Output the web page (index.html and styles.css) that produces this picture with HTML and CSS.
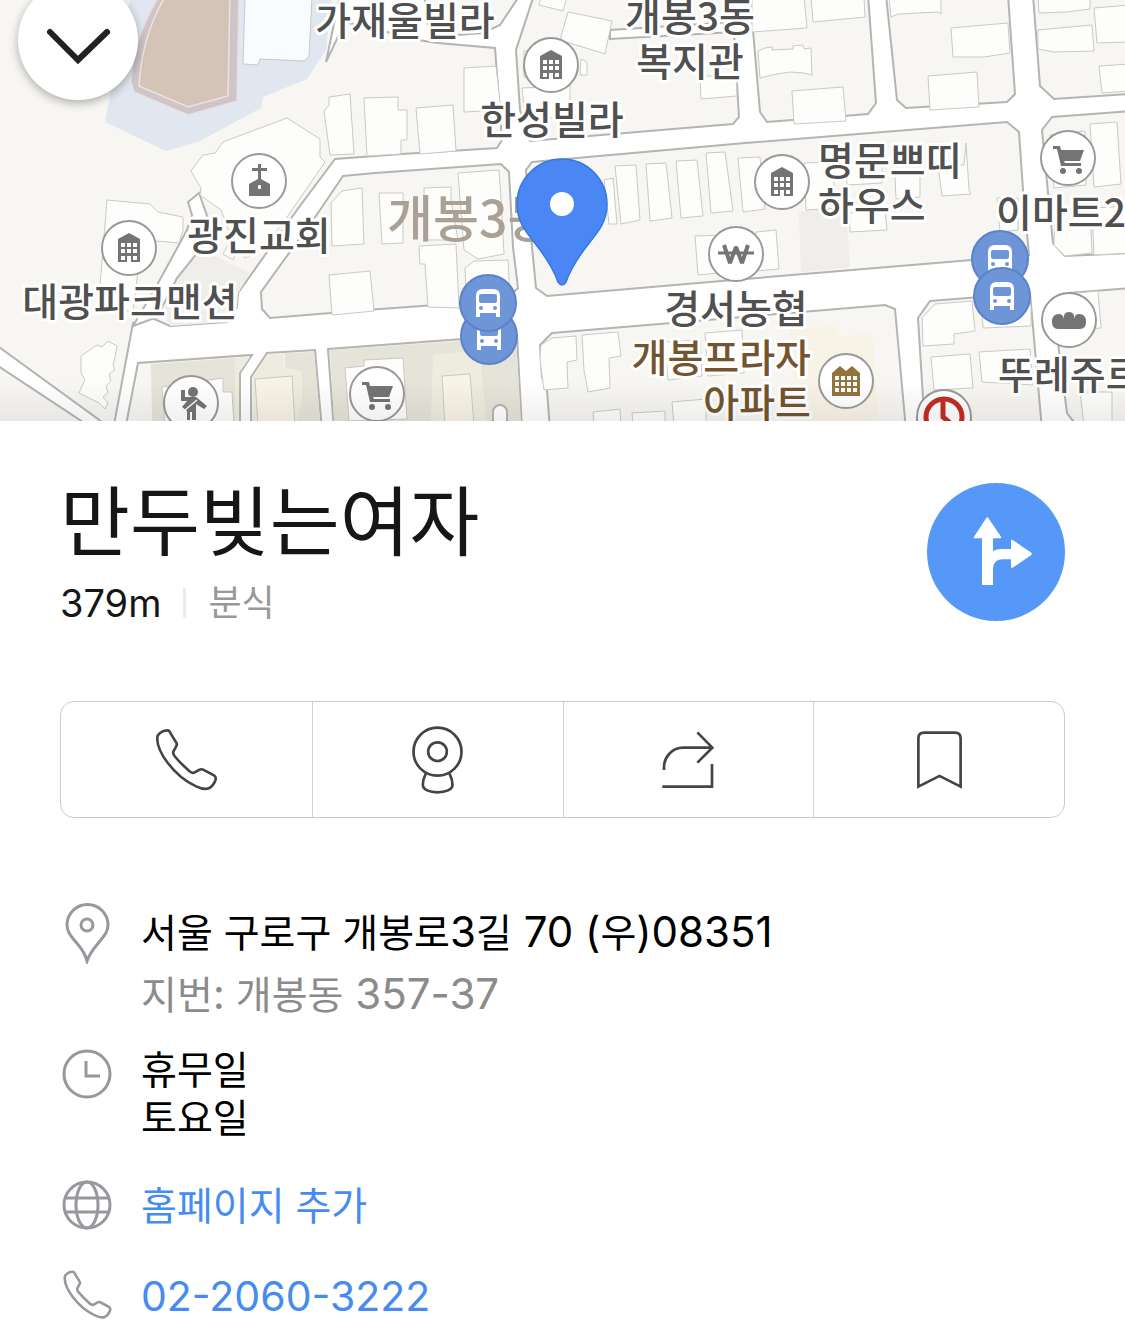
FILE: index.html
```html
<!DOCTYPE html>
<html lang="ko">
<head>
<meta charset="utf-8">
<meta name="viewport" content="width=device-width, initial-scale=1">
<title>만두빚는여자</title>
<link rel="stylesheet" href="styles.css">
</head>
<body>
<svg class="defs" aria-hidden="true">
  <symbol id="phone" viewBox="312 114 190 190">
    <path d="M319 142C319 135 330 121 350 121C356 121 357 126 360 132L376 158C380 164 378 167 375 171L368 184C365 190 367 194 372 200C385 216 402 232 417 245C423 251 428 250 433 247L446 240C451 237 455 238 460 241L490 257C497 261 496 266 494 272C490 282 482 292 474 296C466 299 450 297 436 290C400 274 372 248 350 219C330 192 317 165 319 142Z"/>
  </symbol>
  <g id="building">
    <circle class="poi" r="27"/>
    <path class="glyph" d="M-11-9L0-15L11-9V14H-11Z"/>
    <path class="cut" d="M-8-5h4v4h-4zM-2-5h4v4h-4zM4-5h4v4h-4zM-8 1h4v4h-4zM-2 1h4v4h-4zM4 1h4v4h-4zM-8 8h4v4h-4zM4 8h4v4h-4zM-2 8h4v7h-4z"/>
  </g>
  <g id="cart">
    <circle class="poi" r="27"/>
    <path class="glyph" d="M-15-12H-8L-7-8H16L12 3H-4L-3 5H13V8H-7L-11-9H-15Z"/>
    <circle class="glyph" cx="-5" cy="13" r="3"/><circle class="glyph" cx="11" cy="13" r="3"/>
  </g>
  <g id="bus">
    <circle class="stop" r="28"/>
    <path class="cut" d="M-12-7Q-12-14-5-14H5Q12-14 12-7V14H8V10H-8V14H-12Z"/>
    <rect class="stop-fill" x="-9" y="-9" width="18" height="9" rx="2"/>
    <circle class="stop-fill" cx="-7" cy="5" r="2"/><circle class="stop-fill" cx="7" cy="5" r="2"/>
  </g>
</svg>

<main class="page">
  <section class="map" aria-label="지도">
    <svg class="map-canvas" viewBox="0 0 1125 421" preserveAspectRatio="xMidYMid slice">
      <defs>
        <linearGradient id="fade" x1="0" y1="0" x2="0" y2="1">
          <stop offset="0" stop-color="#000" stop-opacity="0"/>
          <stop offset="1" stop-color="#000" stop-opacity=".06"/>
        </linearGradient>
      </defs>
      <rect class="road" width="1125" height="421"/>
      <!-- city blocks -->
      <g class="block">
        <path d="M-5-5H340L326 62L345 22L400 35L418 40L438 43L495 48L502 140L497 148L402 154L335 159L297 210L238 293L237 307L227 322L170 326L152 318L133 323L113 430L-5 344Z"/>
        <path d="M-5 364L95 430H-5Z"/>
        <path d="M425-5Q424 20 431 30L458 35L483 33L500 25L520-5Z"/>
        <path d="M343 176L375 173L501 164L509 172L513 247L518 288L505 300L380 309L270 318L262 309L261 292L320 210Z"/>
        <path d="M125 430L138 363L252 355L240 373V430Z"/>
        <path d="M251 430V377L267 353L315 350L322 430Z"/>
        <path d="M334 430L328 349L517 335L522 430Z"/>
        <path d="M534-5L516 50L520 110L530 141L733 124L739 117L734 32L610 39V30L733 22V-5Z"/>
        <path d="M750-5L760 112L767 122L868 114L876 103L868-5Z"/>
        <path d="M886-5L897 100L906 108L1007 102L1015 94L1008-5Z"/>
        <path d="M1033-5L1040 86L1054 99L1130 94V-5Z"/>
        <path d="M532 162L745 143L1007 122L1019 132L1023 190L1029 255L972 260L745 279L547 296L536 288L532 247L526 170Z"/>
        <path d="M1130 111L1052 117L1042 130L1048 193L1053 243L1065 256L1130 253Z"/>
        <path d="M552 333L885 305L895 309L906 430H550L547 390L542 377L540 345Z"/>
        <path d="M930 301L1030 293L1033 327L1042 430H925L918 318Z"/>
        <path d="M1068 293L1130 288V430H1080L1067 413L1058 343Z"/>
      </g>
      <!-- tinted grounds -->
      <g>
        <path fill="#e0e7f0" d="M131-5H332L326 50L307 79L263 97L261 108L198 142L166 151L105 122L112 85Z"/>
        <path fill="#cfc4c8" stroke="#e8e0e2" stroke-width="1.5" d="M160-5Q134 35 131 82L134 92L188 115L237 101L239-5Z"/>
        <path fill="#d4c4b7" stroke="#eee4de" stroke-width="1.5" d="M166-5Q142 35 139 86L188 107L228 96L230-5Z"/>
        <path fill="#efeeea" d="M202 250L250 273L238 293L237 307L227 322L170 326L162 307L177 278ZM799 212L846 205L850 267L801 272Z"/>
        <path fill="#e6e4d8" d="M151 364L235 358V421H152ZM285 353L314 352L320 421H275V375H285ZM330 350L516 337L521 421H334Z"/>
        <path fill="#eeecdf" d="M235 358L250 357L239 373V421H235ZM253 377L268 354L284 353V367L302 372V400L296 421H252ZM433 355L480 350L486 421H431Z"/>
        <path fill="#f8f3e7" d="M790 329L834 326L841 336L872 334L878 415L870 421H795Z"/>
      </g>
      <path class="lane" d="M199 193L188 202L192 215L187 230L157 285L133 326L160 316L162 307L177 278L202 247L212 230Z"/>
      <path class="lane" d="M493 430V412A7 7 0 0 1 507 412V430Z"/>
      <!-- buildings -->
      <g class="house">
        <path fill="#f8fcff" d="M245-2L243 64L258 65L260 59L304 61L309 56L312-2Z"/>
        <path d="M191 171L203 155L215 153L223 142L287 118L320 139V157L325 162L285 220L262 250L245 258L238 248L233 260L223 254L232 238L221 210L200 195L201 188Z"/>
        <path d="M107 200L150 204L158 212L183 217V230L179 243L157 241L140 255L133 311H98Z"/>
        <path d="M324 111L329 105V97L350 94L354 154L330 155Z"/>
        <path d="M364 98L398 97V110H407V140H401V154L367 156ZM416 108L453 105L456 151L420 154ZM464 68L496 66L501 110L464 112ZM524 51H535V77H524ZM581 59L587 62V75H580ZM522 88L570 86V118H525Z"/>
        <path d="M331 203L342 191L362 188L364 244L332 246ZM329 275L370 271L374 311L332 315ZM379 193H403V243L382 244ZM424 188L451 187V200L458 240H425ZM458 173L499 170L501 199L504 254L478 259L464 250ZM419 246L456 244L459 308L428 307L425 264H420ZM465 268L474 261L508 260L510 296H466Z"/>
        <path d="M541-3L539 5L563 11L567-3ZM568 12L612 21L605 54L560 40ZM700 76L701 99L737 96L736 76Z"/>
        <path d="M752-3V32L807 28L804-3ZM811-3L813 22L865 17L864-3ZM758 51L765 48L772 47V50L793 49V46L803 45L804 49L811 48L812 75L804 73L790 72L772 75L760 78ZM792 91L843 87L846 121L794 124Z"/>
        <path d="M889-3L891 17L898 14L938 12L941 14V-3ZM951 28L1008 23L1010 53L984 57L953 57ZM928 76L977 72L979 107L930 110Z"/>
        <path d="M1038-3L1039 13L1066 12L1090 9V-3ZM1038 30L1092 25L1094 51L1054 52L1038 49ZM1094 8L1130 5V42L1097 43ZM1099 66L1130 64V91L1102 93Z"/>
        <path d="M604 180L613 178L617 224H609ZM615 166L636 165L640 220L621 224ZM646 164L666 163L672 218L650 221ZM676 161L697 160L703 216L681 218ZM706 153L725 152L733 211L711 213ZM738 158L760 157L765 209L743 212ZM804 163L830 162L838 208L806 210ZM845 160H882V183L847 185ZM895 176L920 175V197L896 199ZM938 165H964L966 143L969 190L971 194L942 196ZM850 213L885 211L887 230L850 232ZM695 236L726 235L728 272L698 275ZM756 232L776 230L779 269L754 271ZM997 198H1018V230L1000 232Z"/>
        <path d="M1050 135L1085 131L1086 185L1054 188ZM1090 124L1117 122L1121 184L1094 187ZM1055 210L1090 208L1092 253L1065 256L1054 245ZM1092 208L1130 206V253L1094 255Z"/>
        <path d="M541 345L552 338L576 336L577 360L567 362L568 388L544 390L540 360ZM582 335L618 332L621 356L609 358L610 388L588 392L584 370ZM593 412L620 409L621 425H594ZM632 413L665 411V425H633ZM672 402L706 399V425H674ZM665 342L700 340L702 376L668 380ZM705 333L742 330L744 373L708 376Z"/>
        <path d="M922 318L935 304L972 301L975 331L954 334V344L923 346ZM931 357L970 354L973 388L934 390ZM979 352L1030 349L1033 385L982 382ZM982 310L1031 305V326L983 328ZM1066 294L1098 291L1101 328L1068 330ZM1080 392H1112V425H1084Z"/>
        <path d="M81 356L97 345L102 347L108 341L117 346L115 357L113 365L115 370L109 374L111 381L106 386L108 393L103 397L108 403L105 409L99 403L79 393L85 380L81 373ZM162 387L223 378V392H232L234 425H165ZM345 368L364 366V360L403 358L407 419L349 421Z"/>
        <path fill="#f8f3e7" d="M255 379L292 376L295 425H258ZM442 376L470 374L474 425H445Z"/>
      </g>
      <!-- places -->
      <use href="#building" x="551" y="65"/>
      <use href="#building" x="129" y="248"/>
      <use href="#building" x="782" y="182"/>
      <use href="#cart" x="1068" y="158"/>
      <use href="#cart" x="377" y="394"/>
      <g transform="translate(259 181)">
        <circle class="poi" r="27"/>
        <path class="glyph" d="M-1-17H2V-13H8V-10H2V-2L11 3V15H-10V3L-1-2V-10H-7V-13H-1Z"/>
        <rect class="cut" x="-1" y="4" width="3" height="4" rx="1"/>
      </g>
      <g transform="translate(736 254)">
        <circle class="poi" r="27"/>
        <path class="won" d="M-12-9L-6 9L0-7L6 9L12-9"/>
        <path class="won-bar" d="M-18-1H18"/>
      </g>
      <g transform="translate(1069 320)">
        <circle class="poi" r="27"/>
        <path class="glyph" d="M-17 2Q-17-6-10-6Q-6-6-5-1Q-6-8 0-8Q6-8 5-1Q6-6 10-6Q17-6 17 2Q17 9 11 9H-11Q-17 9-17 2Z"/>
      </g>
      <g transform="translate(846 381)">
        <circle class="poi" r="27"/>
        <path fill="#94733f" d="M-14-8L-6-15L0-10L6-15L14-8V15H-14Z"/>
        <path class="cut" d="M-11-5h4v4h-4zM-5-5h4v4h-4zM1-5h4v4h-4zM7-5h4v4h-4zM-11 1h4v4h-4zM-5 1h4v4h-4zM1 1h4v4h-4zM7 1h4v4h-4zM-11 7h4v4h-4zM-5 7h4v4h-4zM1 7h4v4h-4zM7 7h4v4h-4z"/>
      </g>
      <g transform="translate(191 403)">
        <circle class="poi" r="27"/>
        <circle class="glyph" cx="2" cy="-11" r="5"/>
        <path class="glyph" d="M-10-13H-6V-6H5L16 3L13 6L5 1V17H1V9H-1V17H-4V8L-9 4L-4-2H-10Z"/>
        <path d="M-6 7L6-3" stroke="#fff" stroke-width="1.5"/>
      </g>
      <g transform="translate(944 417)">
        <circle class="poi" r="27"/>
        <circle r="18" fill="none" stroke="#c42b25" stroke-width="5"/>
        <path d="M-1-17V0L11 10" fill="none" stroke="#c42b25" stroke-width="5"/>
      </g>
      <use href="#bus" x="489" y="336"/>
      <use href="#bus" x="488" y="303"/>
      <use href="#bus" x="1000" y="259"/>
      <use href="#bus" x="1002" y="296"/>
      <!-- names -->
      <text class="area" x="387" y="237">개봉3동</text>
      <g class="name">
        <text x="405" y="35">가재울빌라</text>
        <text x="690" y="31">개봉3동</text>
        <text x="690" y="76">복지관</text>
        <text x="552" y="134">한성빌라</text>
        <text x="259" y="250">광진교회</text>
        <text x="130" y="316">대광파크맨션</text>
        <text x="736" y="323">경서농협</text>
      </g>
      <g class="name name-start">
        <text x="818" y="175">명문쁘띠</text>
        <text x="818" y="220">하우스</text>
        <text x="996" y="227">이마트24</text>
        <text x="998" y="389">뚜레쥬르</text>
      </g>
      <g class="name name-brown">
        <text x="811" y="372">개봉프라자</text>
        <text x="811" y="417">아파트</text>
      </g>
      <!-- selected place -->
      <path fill="#4a86f4" stroke="#3579df" stroke-width="1.5" d="M517 204A45 45 0 0 1 607 204C607 221 599 231 590 242C578 257 571 268 566 282Q562 288 558 282C553 268 546 257 534 242C525 231 517 221 517 204Z"/>
      <circle cx="562" cy="204" r="12" fill="#fff"/>
      <rect y="381" width="1125" height="40" fill="url(#fade)"/>
    </svg>
    <button class="collapse" type="button" aria-label="닫기">
      <svg width="120" height="120" viewBox="0 0 120 120"><path d="M32 52L60 80L89 52"/></svg>
    </button>
  </section>

  <section class="sheet">
    <header class="head">
      <div class="head-text">
        <h1 class="title">만두빚는여자</h1>
        <p class="meta"><span class="distance">379m</span><span class="category">분식</span></p>
      </div>
      <button class="route" type="button" aria-label="길찾기">
        <svg width="138" height="138" viewBox="81 42 414 414"><path d="M246 348V208H224Q219 208 222 203L259 147Q262 143 265 147L303 203Q305 208 301 208H279V247Q290 240 304 240H333V216Q333 211 338 213L394 251Q397 255 394 258L338 296Q333 298 333 293V271H306Q279 273 279 300V348Z"/></svg>
      </button>
    </header>

    <div class="actions">
      <button class="action" type="button" aria-label="전화"><svg width="63" height="63"><use href="#phone"/></svg></button>
      <button class="action" type="button" aria-label="로드뷰">
        <svg width="55" height="70" viewBox="1079 104 164 210"><circle cx="1161" cy="184" r="72"/><circle cx="1161" cy="184" r="28"/><path d="M1126 250C1118 265 1117 275 1117 283C1117 298 1137 306 1161 306C1185 306 1206 298 1206 283C1206 272 1203 262 1197 250"/></svg>
      </button>
      <button class="action" type="button" aria-label="공유">
        <svg width="56" height="60" viewBox="300 118 168 180"><path d="M312 238V230C312 198 337 171 370 171H456M412 125L457 171L412 216M307 288H456V220"/></svg>
      </button>
      <button class="action" type="button" aria-label="저장">
        <svg width="49" height="61" viewBox="1064 120 146 182"><path d="M1074 292V148Q1074 131 1091 131H1183Q1200 131 1200 148V292L1137 260Z"/></svg>
      </button>
    </div>

    <div class="info">
      <div class="row row-address">
        <svg class="icon" width="54" height="62" viewBox="0 0 54 62"><path d="M27 59C25 50 20 45 15 39C10 33 7 29 7 23A20 20 0 0 1 48 23C48 29 45 33 40 39C35 45 30 50 27 59Z"/><circle cx="27" cy="23" r="6"/></svg>
        <address class="lines">
          <p>서울 구로구 개봉로<span class="num">3</span>길<span class="num"> 70 (</span>우<span class="num">)08351</span></p>
          <p class="muted">지번<span class="num">:</span> 개봉동<span class="num"> 357-37</span></p>
        </address>
      </div>
      <div class="row row-hours">
        <svg class="icon" width="54" height="56" viewBox="0 0 54 56"><circle cx="27" cy="28" r="23"/><path d="M26 15V30H40"/></svg>
        <div class="lines"><p>휴무일</p><p>토요일</p></div>
      </div>
      <div class="row row-home">
        <svg class="icon" width="54" height="58" viewBox="0 0 54 58"><circle cx="27" cy="29" r="23"/><ellipse cx="27" cy="29" rx="11" ry="23"/><path d="M6 22H48M6 36H48"/></svg>
        <div class="lines"><a href="#">홈페이지 추가</a></div>
      </div>
      <div class="row row-phone">
        <svg class="icon icon-phone" width="54" height="58" viewBox="0 0 54 58"><use href="#phone" x="3" y="4" width="49" height="49"/></svg>
        <div class="lines"><a href="tel:02-2060-3222">02-2060-3222</a></div>
      </div>
    </div>
  </section>
</main>
</body>
</html>
```
FILE: styles.css
```css
* { box-sizing: border-box; }

body {
  margin: 0;
  background: #fff;
  color: #000;
  font-family: Inter, "Noto Sans CJK KR", sans-serif;
}

h1, p { margin: 0; font-weight: 400; }

button {
  padding: 0;
  border: 0;
  background: none;
  cursor: pointer;
}

svg { display: block; }
.defs { position: absolute; width: 0; height: 0; }

/* map */
.map {
  position: relative;
  height: 421px;
  overflow: hidden;
}
.map-canvas { width: 100%; height: 100%; }
.road { fill: #fff; }
.block { fill: #f7f6f2; stroke: #b4b4b2; stroke-width: 2; }
.lane { fill: #fff; stroke: #b4b4b2; stroke-width: 2; }
.house { fill: #fdfdfc; stroke: #c9c9c6; stroke-width: 1; }
.poi { fill: #fff; stroke: #999; stroke-width: 2; }
.glyph { fill: #747474; }
.cut { fill: #fff; }
.stop { fill: #6d95d8; stroke: #5b83c8; stroke-width: 2; }
.stop-fill { fill: #6d95d8; }
.won { fill: none; stroke: #747474; stroke-width: 4; stroke-linejoin: bevel; }
.won-bar { stroke: #747474; stroke-width: 3; }
.name {
  fill: #505050;
  stroke: #fff;
  stroke-width: 6px;
  stroke-linejoin: round;
  paint-order: stroke;
  font: 500 39px "Noto Sans CJK KR", sans-serif;
  text-anchor: middle;
}
.name-start { text-anchor: start; }
.name-brown { fill: #74542f; text-anchor: end; }
.area {
  fill: #aaa095;
  font: 500 50px "Noto Sans CJK KR", sans-serif;
}

.collapse {
  position: absolute;
  top: -20px;
  left: 18px;
  width: 120px;
  height: 120px;
  border-radius: 50%;
  background: #fff;
  box-shadow: 0 3px 10px rgba(0, 0, 0, .3);
}
.collapse path {
  fill: none;
  stroke: #222;
  stroke-width: 6;
  stroke-linecap: round;
}

/* place sheet */
.sheet { padding: 55px 60px 6px; }
.head {
  display: flex;
  align-items: center;
  justify-content: space-between;
}
.title {
  color: #161616;
  font-size: 76px;
  line-height: 92px;
}
.meta {
  display: flex;
  align-items: center;
  margin-top: 10px;
  font-size: 38px;
  line-height: 50px;
  color: #161616;
}
.category {
  display: flex;
  align-items: center;
  font-size: 36px;
  color: #999;
}
.category::before {
  content: "";
  width: 3px;
  height: 30px;
  margin: 0 22px;
  background: #ebebeb;
}
.route {
  flex: none;
  width: 138px;
  height: 138px;
  border-radius: 50%;
  background: #5698f8;
}
.route path { fill: #fff; }

.actions {
  display: grid;
  grid-template-columns: repeat(4, 1fr);
  height: 117px;
  margin-top: 73px;
  border: 1px solid #ccc;
  border-radius: 14px;
}
.action {
  display: flex;
  align-items: center;
  justify-content: center;
}
.action + .action { border-left: 1px solid #d0d0d0; }
.action svg {
  fill: none;
  stroke: #444;
  stroke-width: 8;
}

.info { margin-top: 84px; }
.row {
  display: flex;
  gap: 27px;
  font-size: 39px;
}
.icon {
  flex: none;
  fill: none;
  stroke: #96989d;
  stroke-width: 3;
}
.icon-phone { stroke-width: 10; }
.lines { font-style: normal; line-height: 60px; }
.num { font-size: 42px; line-height: 1; }
.muted { color: #8b8b8b; }
.row-address .lines { line-height: 62px; }
.row-hours { margin-top: 20px; }
.row-hours .lines { line-height: 48px; }
.row-home { margin-top: 34px; }
.row-phone { margin-top: 30px; font-size: 41px; }
a { display: block; color: #468cf0; text-decoration: none; }
```
